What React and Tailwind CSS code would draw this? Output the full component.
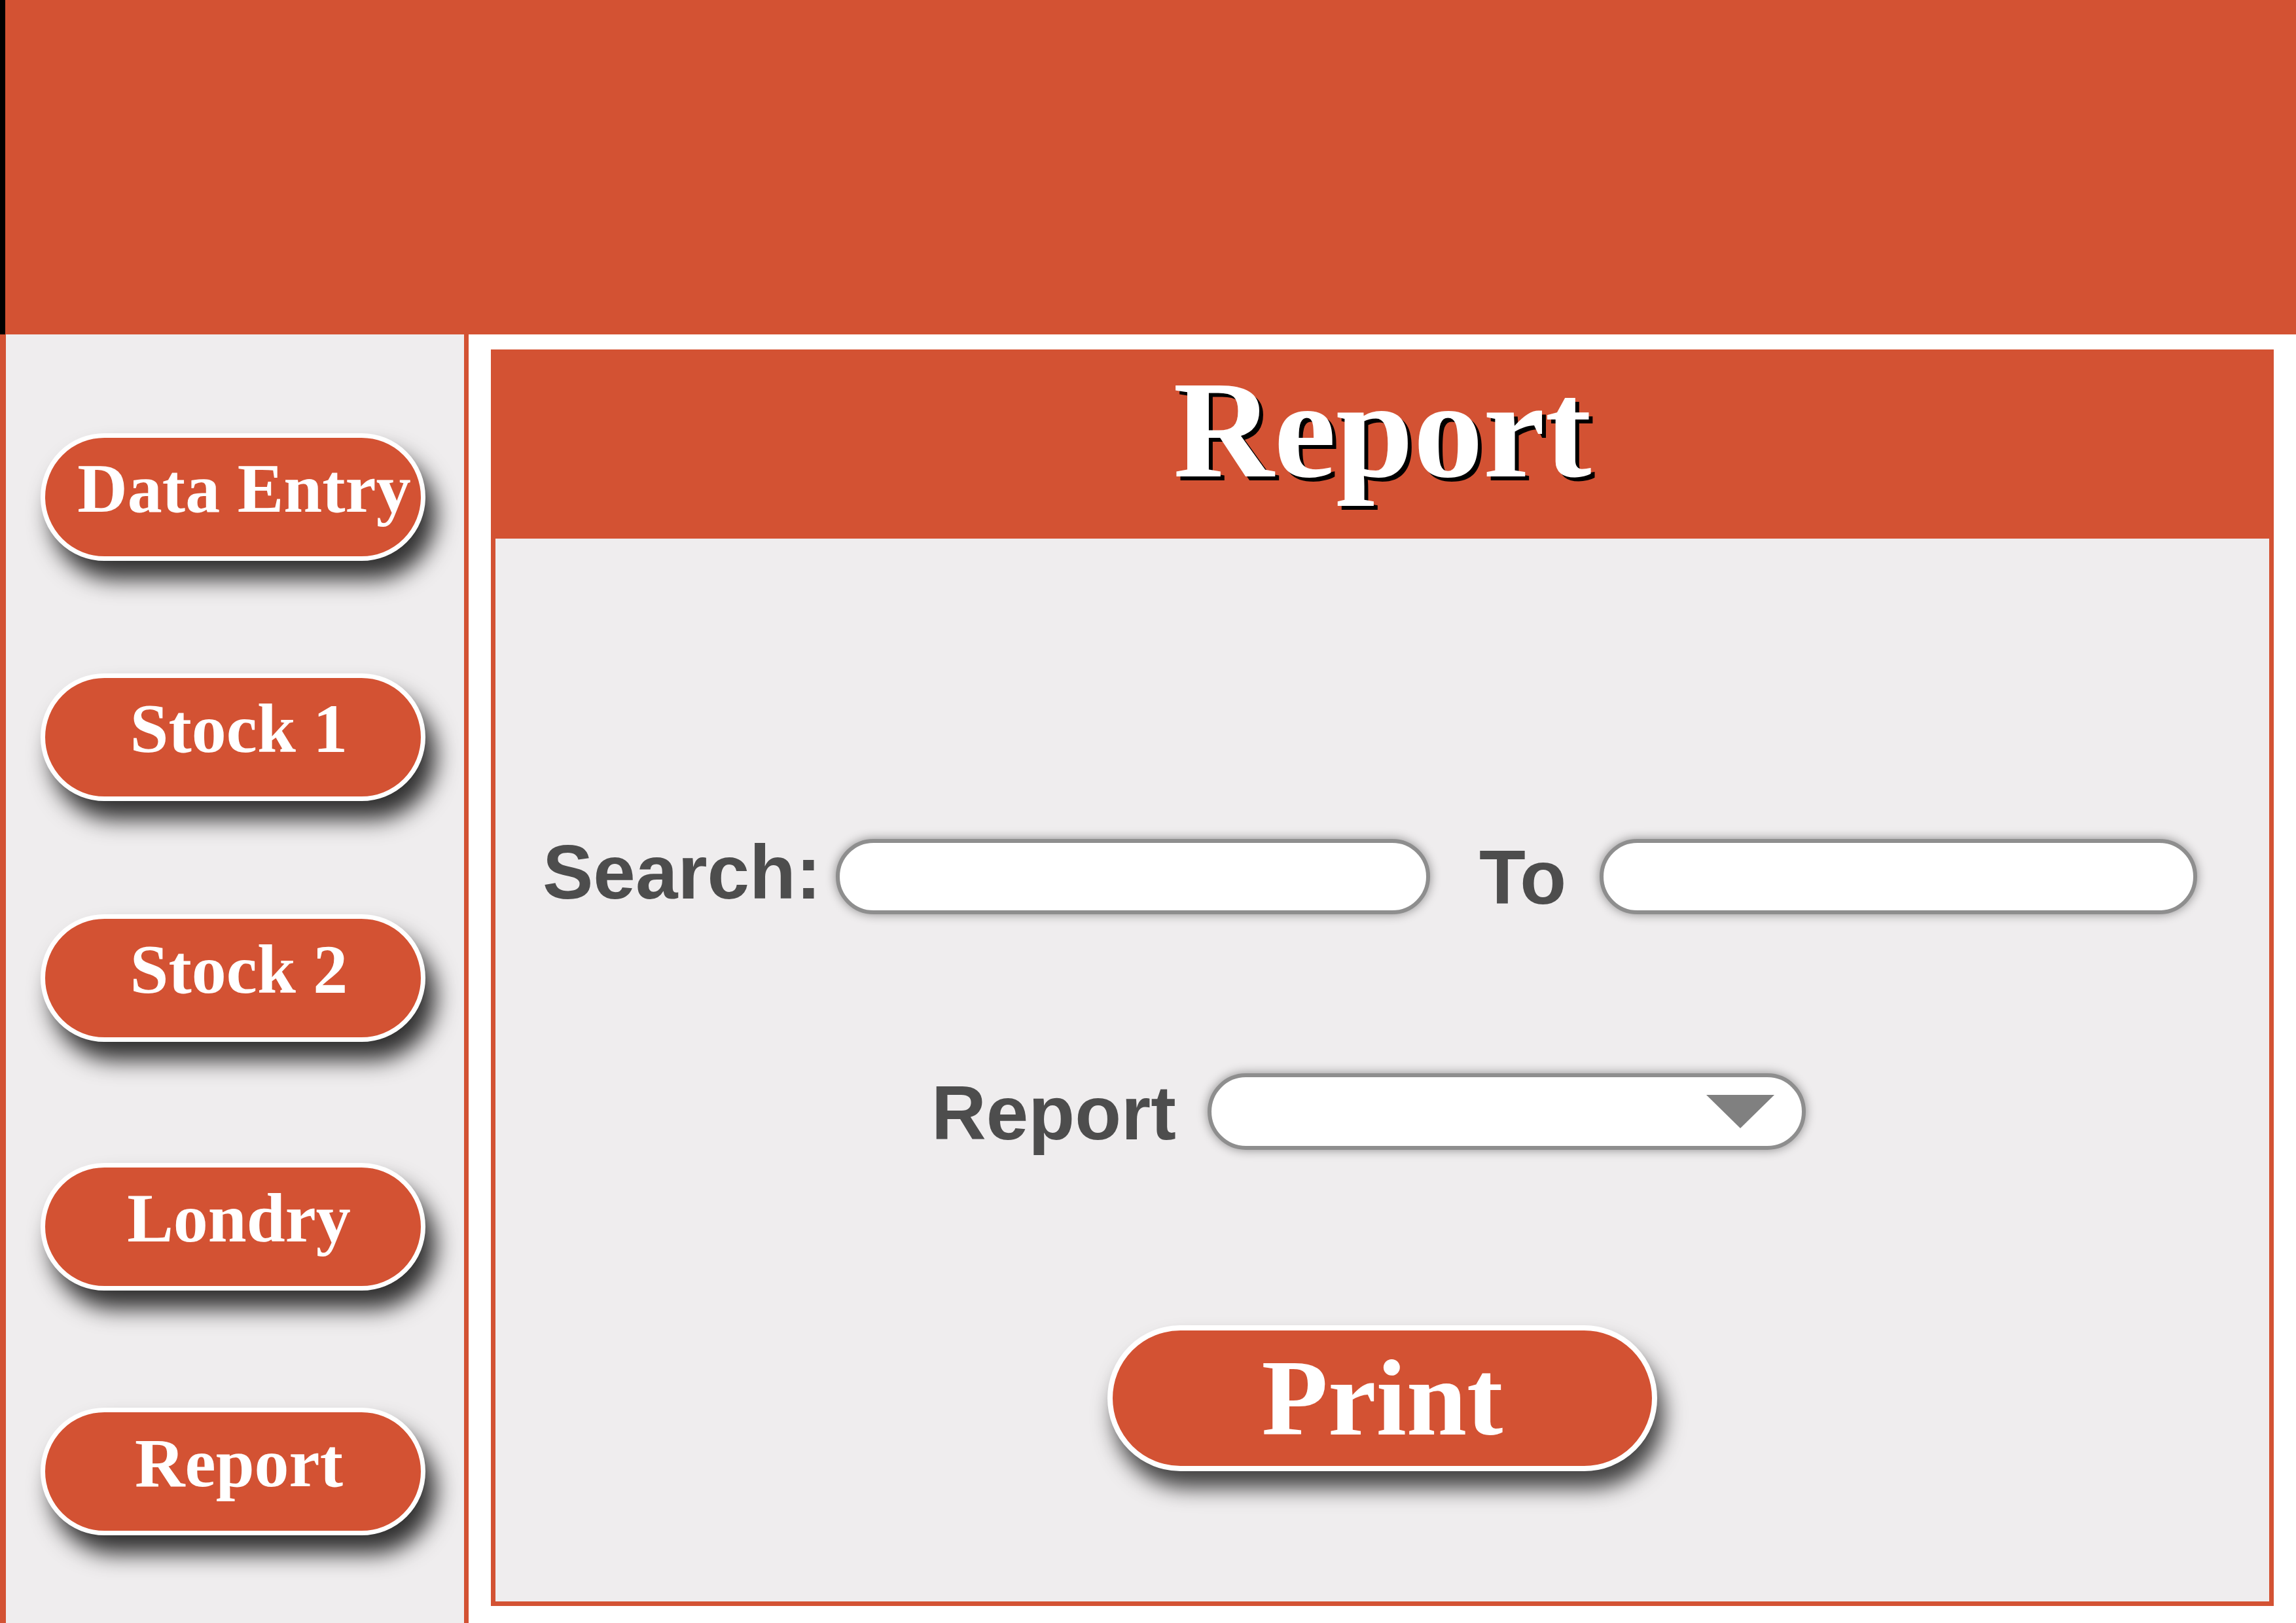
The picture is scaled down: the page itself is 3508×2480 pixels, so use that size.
import React from "react";

const NAV = [
  { label: "Data Entry", mt: "mt-[151px]", pl: "pl-[34px]" },
  { label: "Stock 1", mt: "mt-[172px]", pl: "pl-[18px]" },
  { label: "Stock 2", mt: "mt-[173px]", pl: "pl-[18px]" },
  { label: "Londry", mt: "mt-[185px]", pl: "pl-[18px]" },
  { label: "Report", mt: "mt-[179px]", pl: "pl-[18px]" },
];

function NavButton({ label, mt, pl }) {
  return (
    <button
      className={`${mt} ${pl} w-[588px] h-[195px] shrink-0 rounded-full border-[7px] border-white bg-[#D35233] shadow-[16px_28px_34px_rgba(0,0,0,0.8)] flex justify-center items-start pt-[25px]`}
    >
      <span className="font-['Liberation_Serif',serif] font-bold text-[106px] leading-none text-white whitespace-nowrap">
        {label}
      </span>
    </button>
  );
}

function Field({ className }) {
  return (
    <div
      className={`${className} h-[115px] rounded-full border-[6px] border-[#8e8e8e] bg-white shadow-[0_0_16px_rgba(0,0,0,0.42)]`}
    />
  );
}

const labelCls =
  "font-['Liberation_Sans',Arial,sans-serif] font-bold text-[116px] leading-none text-[#4d4d4d] whitespace-nowrap";

export default function App() {
  return (
    <div className="w-[3508px] h-[2480px] bg-white flex flex-col overflow-hidden">
      {/* top bar */}
      <header className="h-[511px] shrink-0 bg-[#D35233] border-l-[8px] border-black" />

      <div className="flex flex-1 min-h-0">
        {/* side menu */}
        <aside className="w-[716px] shrink-0 bg-[#EFEDEE] border-l-[9px] border-r-[7px] border-[#D35233] flex flex-col items-start pl-[53px]">
          {NAV.map((n) => (
            <NavButton key={n.label} {...n} />
          ))}
        </aside>

        {/* report panel */}
        <main className="ml-[34px] mt-[23px] w-[2724px] h-[1920px] border-[7px] border-[#D35233] flex flex-col">
          <div className="h-[282px] shrink-0 bg-[#D35233] flex justify-center items-start pt-[9px]">
            <h1 className="font-['Liberation_Serif',serif] font-bold text-[213px] leading-none text-white [text-shadow:6px_6px_0_#000]">
              Report
            </h1>
          </div>

          <div className="flex-1 bg-[#EFEDEE] flex flex-col pt-[459px]">
            <div className="flex items-start ml-[72px]">
              <span className={`${labelCls} w-[448px] -mt-[7px]`}>Search:</span>
              <Field className="w-[908px]" />
              <span className={`${labelCls} w-[184px] ml-[75px] mt-[1px]`}>To</span>
              <Field className="w-[913px]" />
            </div>

            <div className="flex items-start ml-[666px] mt-[241px]">
              <span className={`${labelCls} w-[422px] mt-[3px]`}>Report</span>
              <div className="w-[914px] h-[117px] rounded-full border-[6px] border-[#8e8e8e] bg-white shadow-[0_0_16px_rgba(0,0,0,0.42)] flex justify-end items-center pr-[42px]">
                <svg width="104" height="51" viewBox="0 0 104 51">
                  <polygon points="0,0 104,0 52,51" fill="#808080" />
                </svg>
              </div>
            </div>

            <button className="self-center mt-[266px] w-[840px] h-[223px] rounded-full border-[8px] border-white bg-[#D35233] shadow-[10px_26px_32px_rgba(0,0,0,0.72)] flex justify-center items-start pt-[20px]">
              <span className="font-['Liberation_Serif',serif] font-bold text-[166px] leading-none text-white">
                Print
              </span>
            </button>
          </div>
        </main>
      </div>
    </div>
  );
}
